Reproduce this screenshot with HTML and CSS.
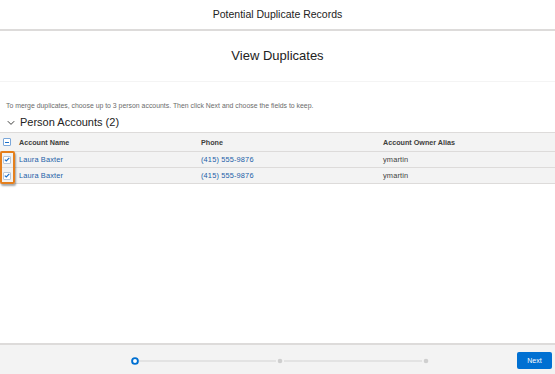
FILE: index.html
```html
<!DOCTYPE html>
<html>
<head>
<meta charset="utf-8">
<link rel="stylesheet" href="styles.css">
</head>
<body>
<div class="page">
  <header class="topbar">Potential Duplicate Records</header>
  <div class="title">View Duplicates</div>
  <main class="content">
    <p class="hint">To merge duplicates, choose up to 3 person accounts. Then click Next and choose the fields to keep.</p>
    <h2 class="section"><svg class="chev" width="8" height="6" viewBox="0 0 8 6"><path d="M0.8 1.2 L4 4.4 L7.2 1.2" fill="none" stroke="#3e3e3c" stroke-width="1"/></svg>Person Accounts (2)</h2>
    <div class="table">
      <div class="row head">
        <div class="cell cb"><span class="box mixed"><span class="dash"></span></span></div>
        <div class="cell">Account Name</div>
        <div class="cell">Phone</div>
        <div class="cell">Account Owner Alias</div>
      </div>
      <div class="row">
        <div class="cell cb"><span class="box"><svg width="6" height="5" viewBox="0 0 6 5"><path d="M0.8 2.6 L2.3 4 L5.3 0.9" fill="none" stroke="#1b6fc9" stroke-width="1.2"/></svg></span></div>
        <div class="cell link">Laura Baxter</div>
        <div class="cell link">(415) 555-9876</div>
        <div class="cell">ymartin</div>
      </div>
      <div class="row">
        <div class="cell cb"><span class="box"><svg width="6" height="5" viewBox="0 0 6 5"><path d="M0.8 2.6 L2.3 4 L5.3 0.9" fill="none" stroke="#1b6fc9" stroke-width="1.2"/></svg></span></div>
        <div class="cell link">Laura Baxter</div>
        <div class="cell link">(415) 555-9876</div>
        <div class="cell">ymartin</div>
      </div>
      <div class="highlight"></div>
    </div>
  </main>
  <footer class="footer">
    <div class="spacer"></div>
    <svg class="progress" width="302" height="10" viewBox="0 0 302 10">
      <line x1="9" y1="5" x2="146" y2="5" stroke="#d4d4d4" stroke-width="1.2"/>
      <line x1="154" y1="5" x2="292" y2="5" stroke="#d4d4d4" stroke-width="1.2"/>
      <circle cx="150" cy="5" r="2.3" fill="#cfcfcf"/>
      <circle cx="296" cy="5" r="2.3" fill="#cfcfcf"/>
      <circle cx="5" cy="5" r="2.9" fill="#fff" stroke="#0070d2" stroke-width="1.9"/>
    </svg>
    <div class="actions"><button class="next">Next</button></div>
  </footer>
</div>
</body>
</html>
```
FILE: styles.css
```css
html, body {
  margin: 0;
  padding: 0;
  background: #fff;
}
body {
  font-family: "Liberation Sans", Arial, sans-serif;
  color: #3e3e3c;
}
.page {
  height: 374px;
  display: flex;
  flex-direction: column;
}
.topbar {
  height: 31px;
  box-sizing: border-box;
  border-bottom: 2px solid #dddbda;
  text-align: center;
  font-size: 10.5px;
  line-height: 29px;
  color: #222;
}
.title {
  height: 51px;
  box-sizing: border-box;
  border-bottom: 1px solid #f4f4f4;
  text-align: center;
  font-size: 13px;
  line-height: 50px;
  color: #222;
}
.content {
  flex: 1;
  padding-top: 19px;
}
.hint {
  margin: 0 0 0 6px;
  font-size: 6.9px;
  line-height: 9px;
  color: #6b6b6b;
}
.section {
  margin: 3px 0 0 0;
  height: 18px;
  display: flex;
  align-items: center;
  font-size: 11px;
  font-weight: normal;
  color: #222;
}
.chev {
  margin: 1px 5px 0 7px;
}
.table {
  position: relative;
  margin-top: 1px;
  border-top: 1px solid #dddbda;
}
.row {
  display: grid;
  grid-template-columns: 19px 182px 182px 1fr;
  height: 15px;
  align-items: center;
  background: #f3f3f3;
  border-bottom: 1px solid #dddbda;
  font-size: 7.4px;
  letter-spacing: 0.15px;
}
.row.head {
  height: 18px;
  font-weight: bold;
  color: #3e3e3c;
  font-size: 7.2px;
  letter-spacing: 0;
}
.cell {
  white-space: nowrap;
}
.cell.link {
  color: #1b5fa8;
}
.cb {
  display: flex;
  align-items: center;
  padding-left: 3px;
}
.box {
  width: 8px;
  height: 8px;
  box-sizing: border-box;
  background: #fff;
  border: 1px solid #b9c7d8;
  border-radius: 1px;
  display: flex;
  align-items: center;
  justify-content: center;
}
.box.mixed {
  border-color: #7aa7da;
}
.dash {
  width: 4px;
  height: 1px;
  background: #1b6fc9;
}
.highlight {
  position: absolute;
  left: 0;
  top: 18px;
  width: 15px;
  height: 33px;
  box-sizing: border-box;
  border: 2px solid #e57f1c;
  border-radius: 2px;
  box-shadow: 1px 2px 2px rgba(0,0,0,0.35);
}
.footer {
  height: 31px;
  box-sizing: border-box;
  border-top: 2px solid #dddbda;
  background: #f3f3f3;
  display: grid;
  grid-template-columns: 1fr 302px 1fr;
  align-items: center;
}
.progress {
  display: block;
  margin-left: 3px;
  margin-top: 2px;
}
.actions {
  display: flex;
  justify-content: flex-end;
  padding-right: 3px;
}
.next {
  width: 35px;
  height: 17px;
  padding: 0;
  border: none;
  border-radius: 2px;
  background: #0070d2;
  color: #fff;
  font-family: "Liberation Sans", Arial, sans-serif;
  font-size: 7px;
  margin-top: 2px;
}
```
